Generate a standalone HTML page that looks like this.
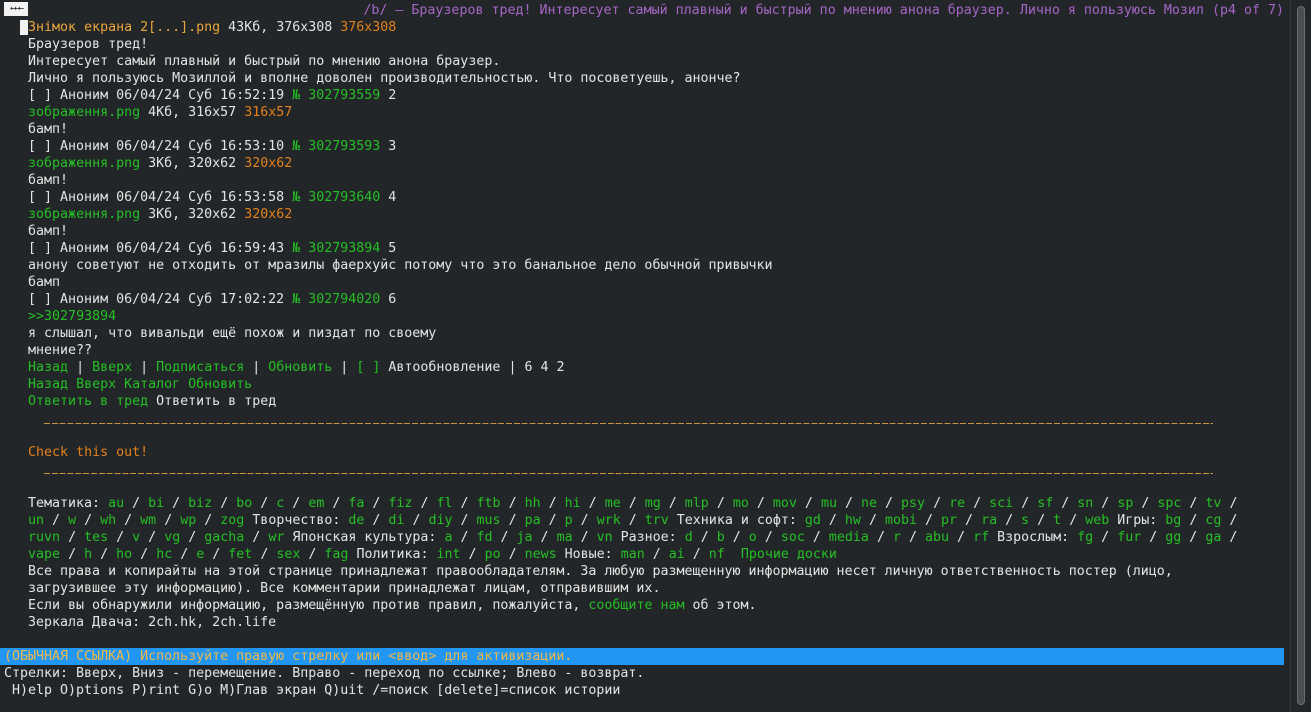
<!DOCTYPE html>
<html><head><meta charset="utf-8">
<style>
html,body{margin:0;padding:0;background:#232628;width:1311px;height:712px;overflow:hidden}
pre{position:absolute;left:4px;top:2px;margin:0;font-family:"DejaVu Sans Mono","Liberation Mono",monospace;font-size:13.3px;line-height:17px;color:#e4e4e4;white-space:pre}
.g{color:#25bf25}.o{color:#e2801c}.y{color:#e8a53c}
.cur{background:#f2f2f2;color:#232628}
.bar{background:#2196f3;color:#eeb848;display:inline-block;width:1280px;margin-left:-4px;padding-left:4px}
#title{position:absolute;top:2px;left:0;width:1284px;text-align:right;font-family:"DejaVu Sans Mono",monospace;font-size:13.3px;line-height:17px;white-space:pre;color:#a566c6}
#div{position:absolute;left:1290px;top:0;width:1px;height:712px;background:#34383a}
#sb{position:absolute;left:1297px;top:6px;width:8px;height:699px;border-radius:4px;background:#4a4e50;box-shadow:inset 0 0 0 1px #6a6e70}
#ico{position:absolute;left:4px;top:2px;width:24px;height:14px;background:#f2f2f2;color:#232628;font-family:"DejaVu Sans Mono",monospace;font-size:10px;line-height:14px;text-align:center;letter-spacing:-2px}
.dash{position:absolute;left:44px;width:1169px;height:1px;background:repeating-linear-gradient(90deg,#c99640 0,#c99640 6px,transparent 6px,transparent 7.83px)}
</style></head><body>
<div id="title">/b/ – Браузеров тред! Интересует самый плавный и быстрый по мнению анона браузер. Лично я пользуюсь Мозил (p4 of 7)</div>
<div id="ico">←←←</div>
<div class="dash" style="top:423px"></div>
<div class="dash" style="top:473px"></div>
<pre>

  <span class="cur"> </span><span class="y">Знімок екрана 2[...].png</span> 43Кб, 376x308 <span class="o">376x308</span>
   Браузеров тред!
   Интересует самый плавный и быстрый по мнению анона браузер.
   Лично я пользуюсь Мозиллой и вполне доволен производительностью. Что посоветуешь, анонче?
   [ ] Аноним 06/04/24 Суб 16:52:19 <span class="g">№ 302793559</span> 2
   <span class="g">зображення.png</span> 4Кб, 316x57 <span class="o">316x57</span>
   бамп!
   [ ] Аноним 06/04/24 Суб 16:53:10 <span class="g">№ 302793593</span> 3
   <span class="g">зображення.png</span> 3Кб, 320x62 <span class="o">320x62</span>
   бамп!
   [ ] Аноним 06/04/24 Суб 16:53:58 <span class="g">№ 302793640</span> 4
   <span class="g">зображення.png</span> 3Кб, 320x62 <span class="o">320x62</span>
   бамп!
   [ ] Аноним 06/04/24 Суб 16:59:43 <span class="g">№ 302793894</span> 5
   анону советуют не отходить от мразилы фаерхуйс потому что это банальное дело обычной привычки
   бамп
   [ ] Аноним 06/04/24 Суб 17:02:22 <span class="g">№ 302794020</span> 6
   <span class="g">&gt;&gt;302793894</span>
   я слышал, что вивальди ещё похож и пиздат по своему
   мнение??
   <span class="g">Назад</span> | <span class="g">Вверх</span> | <span class="g">Подписаться</span> | <span class="g">Обновить</span> | <span class="g">[ ]</span> Автообновление | 6 4 2
   <span class="g">Назад Вверх Каталог Обновить</span>
   <span class="g">Ответить в тред</span> Ответить в тред


   <span class="o">Check this out!</span>


   Тематика: <span class="g">au</span> / <span class="g">bi</span> / <span class="g">biz</span> / <span class="g">bo</span> / <span class="g">c</span> / <span class="g">em</span> / <span class="g">fa</span> / <span class="g">fiz</span> / <span class="g">fl</span> / <span class="g">ftb</span> / <span class="g">hh</span> / <span class="g">hi</span> / <span class="g">me</span> / <span class="g">mg</span> / <span class="g">mlp</span> / <span class="g">mo</span> / <span class="g">mov</span> / <span class="g">mu</span> / <span class="g">ne</span> / <span class="g">psy</span> / <span class="g">re</span> / <span class="g">sci</span> / <span class="g">sf</span> / <span class="g">sn</span> / <span class="g">sp</span> / <span class="g">spc</span> / <span class="g">tv</span> /
   <span class="g">un</span> / <span class="g">w</span> / <span class="g">wh</span> / <span class="g">wm</span> / <span class="g">wp</span> / <span class="g">zog</span> Творчество: <span class="g">de</span> / <span class="g">di</span> / <span class="g">diy</span> / <span class="g">mus</span> / <span class="g">pa</span> / <span class="g">p</span> / <span class="g">wrk</span> / <span class="g">trv</span> Техника и софт: <span class="g">gd</span> / <span class="g">hw</span> / <span class="g">mobi</span> / <span class="g">pr</span> / <span class="g">ra</span> / <span class="g">s</span> / <span class="g">t</span> / <span class="g">web</span> Игры: <span class="g">bg</span> / <span class="g">cg</span> /
   <span class="g">ruvn</span> / <span class="g">tes</span> / <span class="g">v</span> / <span class="g">vg</span> / <span class="g">gacha</span> / <span class="g">wr</span> Японская культура: <span class="g">a</span> / <span class="g">fd</span> / <span class="g">ja</span> / <span class="g">ma</span> / <span class="g">vn</span> Разное: <span class="g">d</span> / <span class="g">b</span> / <span class="g">o</span> / <span class="g">soc</span> / <span class="g">media</span> / <span class="g">r</span> / <span class="g">abu</span> / <span class="g">rf</span> Взрослым: <span class="g">fg</span> / <span class="g">fur</span> / <span class="g">gg</span> / <span class="g">ga</span> /
   <span class="g">vape</span> / <span class="g">h</span> / <span class="g">ho</span> / <span class="g">hc</span> / <span class="g">e</span> / <span class="g">fet</span> / <span class="g">sex</span> / <span class="g">fag</span> Политика: <span class="g">int</span> / <span class="g">po</span> / <span class="g">news</span> Новые: <span class="g">man</span> / <span class="g">ai</span> / <span class="g">nf</span>  <span class="g">Прочие доски</span>
   Все права и копирайты на этой странице принадлежат правообладателям. За любую размещенную информацию несет личную ответственность постер (лицо,
   загрузившее эту информацию). Все комментарии принадлежат лицам, отправившим их.
   Если вы обнаружили информацию, размещённую против правил, пожалуйста, <span class="g">сообщите нам</span> об этом.
   Зеркала Двача: 2ch.hk, 2ch.life

<span class="bar">(ОБЫЧНАЯ ССЫЛКА) Используйте правую стрелку или &lt;ввод&gt; для активизации.</span>
Стрелки: Вверх, Вниз - перемещение. Вправо - переход по ссылке; Влево - возврат.
 H)elp O)ptions P)rint G)o M)Глав экран Q)uit /=поиск [delete]=список истории
</pre>
<div id="div"></div>
<div id="sb"></div>
</body></html>
